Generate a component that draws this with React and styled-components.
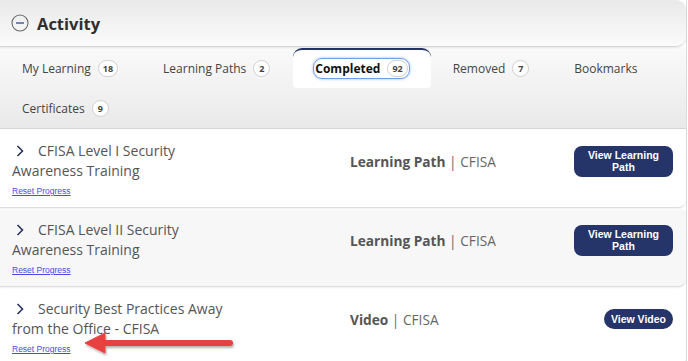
import React from "react";
import styled, { createGlobalStyle } from "styled-components";

const Global = createGlobalStyle`
  html, body { margin: 0; padding: 0; background: #ffffff; }
  body { font-family: "Open Sans", "Liberation Sans", sans-serif; color: #444; }
  * { box-sizing: border-box; }
`;

const Page = styled.div`
  position: relative;
  width: 688px;
  height: 361px;
  overflow: hidden;
  background: #ffffff;
`;

const Panel = styled.div`
  width: 687px;
  border-right: 1px solid #dcdcdc;
`;

const Header = styled.div`
  height: 47px;
  display: flex;
  align-items: center;
  gap: 8px;
  padding-left: 11px;
  background: linear-gradient(#e9e9e9, #fbfbfb);
  border-bottom: 1px solid #d6d6d6;
  border-radius: 0 10px 10px 0;
  box-shadow: 0 1px 2px rgba(0, 0, 0, 0.08);
  position: relative;
  z-index: 2;
`;

const Title = styled.h2`
  margin: 0;
  font-size: 16.5px;
  font-weight: 700;
  color: #2f2f2f;
`;

const Tabs = styled.div`
  display: flex;
  flex-wrap: wrap;
  padding-top: 1px;
  background: linear-gradient(#fafafa, #e9e9e9);
  border-bottom: 1px solid #d4d4d4;
  margin-bottom: 2px;
`;

const Tab = styled.div`
  height: 40px;
  display: flex;
  align-items: center;
  padding: 0 21px 1px 20px;
  font-size: 12px;
  color: #444;
  background: ${(p) => (p.$active ? "#ffffff" : "transparent")};
  border-top: 2px solid ${(p) => (p.$active ? "#253569" : "transparent")};
  border-radius: ${(p) => (p.$active ? "9px 9px 4px 4px" : "0")};
`;

const TabLabel = styled.span`
  display: inline-flex;
  align-items: center;
  gap: 7px;
  padding: 1px;
  font-weight: ${(p) => (p.$active ? 700 : 400)};
  color: ${(p) => (p.$active ? "#111" : "#444")};
  border: 1.5px solid ${(p) => (p.$active ? "#6d9cf3" : "transparent")};
  border-radius: 9px;
  box-shadow: ${(p) => (p.$active ? "0 0 3px rgba(80,140,240,0.6)" : "none")};
`;

const Badge = styled.span`
  display: inline-flex;
  align-items: center;
  justify-content: center;
  min-width: 17px;
  height: 17px;
  padding: 0 4px;
  border: 1px solid #cfcfcf;
  border-radius: 9px;
  background: #fff;
  font-size: 9px;
  font-weight: 700;
  color: #444;
`;

const Row = styled.div`
  background: ${(p) => (p.$alt ? "#f7f7f7" : "#ffffff")};
  padding: 10px 13px 6px 12px;
  border-bottom: 1px solid #dedede;
  border-radius: 0 0 8px 0;
  box-shadow: 0 1px 2px rgba(0, 0, 0, 0.07);
  margin-bottom: 2px;
  height: 77px;
`;

const RowMain = styled.div`
  display: flex;
  align-items: center;
`;

const ItemTitle = styled.div`
  width: 228px;
  font-size: 14px;
  line-height: 20px;
  color: #555;
`;

const Chevron = styled.svg`
  width: 8px;
  height: 12px;
  margin: 0 14px 0 4px;
  vertical-align: -1px;
`;

const Kind = styled.div`
  margin-left: 110px;
  font-size: 13.7px;
  color: #666;
  flex: 1;
  b { font-weight: 700; color: #555; }
`;

const Button = styled.button`
  font-family: "Liberation Sans", Arial, sans-serif;
  font-weight: 700;
  font-size: 10.5px;
  line-height: 12px;
  color: #fff;
  background: #253569;
  border: none;
  border-radius: ${(p) => (p.$pill ? "10px" : "8px")};
  width: ${(p) => p.$w}px;
  height: ${(p) => p.$bh}px;
  padding: 0;
  white-space: nowrap;
  text-align: center;
`;

const Reset = styled.a`
  display: block;
  margin-top: 5px;
  font-family: "Liberation Sans", Arial, sans-serif;
  font-size: 8.5px;
  color: #4a4ae8;
  text-decoration: underline;
`;

const Arrow = styled.svg`
  position: absolute;
  left: 82px;
  top: 330px;
  width: 156px;
  height: 28px;
  overflow: visible;
`;

const MinusIcon = () => (
  <svg width="18" height="18" viewBox="0 0 18 18">
    <circle cx="9" cy="9" r="8" fill="none" stroke="#6a6a6a" strokeWidth="1.1" />
    <line x1="5" y1="9" x2="13" y2="9" stroke="#3d5a99" strokeWidth="1.4" />
  </svg>
);

const ChevronIcon = () => (
  <Chevron viewBox="0 0 8 12">
    <path d="M1.5 1 L6.5 6 L1.5 11" fill="none" stroke="#1f2d55" strokeWidth="1.5" />
  </Chevron>
);

const tabs = [
  { label: "My Learning", count: 18 },
  { label: "Learning Paths", count: 2 },
  { label: "Completed", count: 92, active: true },
  { label: "Removed", count: 7 },
  { label: "Bookmarks" },
  { label: "Certificates", count: 9 },
];

const items = [
  { title: "CFISA Level I Security Awareness Training", kind: "Learning Path", btn: ["View Learning", "Path"], w: 99, bh: 31 },
  { title: "CFISA Level II Security Awareness Training", kind: "Learning Path", btn: ["View Learning", "Path"], w: 99, bh: 31, alt: true },
  { title: "Security Best Practices Away from the Office - CFISA", kind: "Video", btn: ["View Video"], w: 69, bh: 20, pill: true },
];

export default function App() {
  return (
    <Page>
      <Global />
      <Panel>
        <Header>
          <MinusIcon />
          <Title>Activity</Title>
        </Header>
        <Tabs>
          {tabs.map((t) => (
            <Tab key={t.label} $active={t.active}>
              <TabLabel $active={t.active}>
                {t.label}
                {t.count !== undefined && <Badge>{t.count}</Badge>}
              </TabLabel>
            </Tab>
          ))}
        </Tabs>
        {items.map((it) => (
          <Row key={it.title} $alt={it.alt}>
            <RowMain>
              <ItemTitle>
                <ChevronIcon />
                {it.title}
              </ItemTitle>
              <Kind>
                <b>{it.kind}</b> | CFISA
              </Kind>
              <Button $w={it.w} $bh={it.bh} $pill={it.pill}>
                {it.btn.map((l, i) => (
                  <React.Fragment key={l}>
                    {i > 0 && <br />}
                    {l}
                  </React.Fragment>
                ))}
              </Button>
            </RowMain>
            <Reset href="#">Reset Progress</Reset>
          </Row>
        ))}
      </Panel>
      <Arrow viewBox="0 0 156 28">
        <defs>
          <filter id="sh" x="-10%" y="-40%" width="120%" height="180%">
            <feDropShadow dx="1" dy="2" stdDeviation="1.2" floodColor="#000" floodOpacity="0.3" />
          </filter>
        </defs>
        <g filter="url(#sh)" fill="#e8403f" stroke="#e8403f">
          <line x1="20" y1="13" x2="148" y2="13" strokeWidth="6" strokeLinecap="round" />
          <path d="M3 13 L23 3 L23 23 Z" strokeWidth="1" strokeLinejoin="round" />
        </g>
      </Arrow>
    </Page>
  );
}
